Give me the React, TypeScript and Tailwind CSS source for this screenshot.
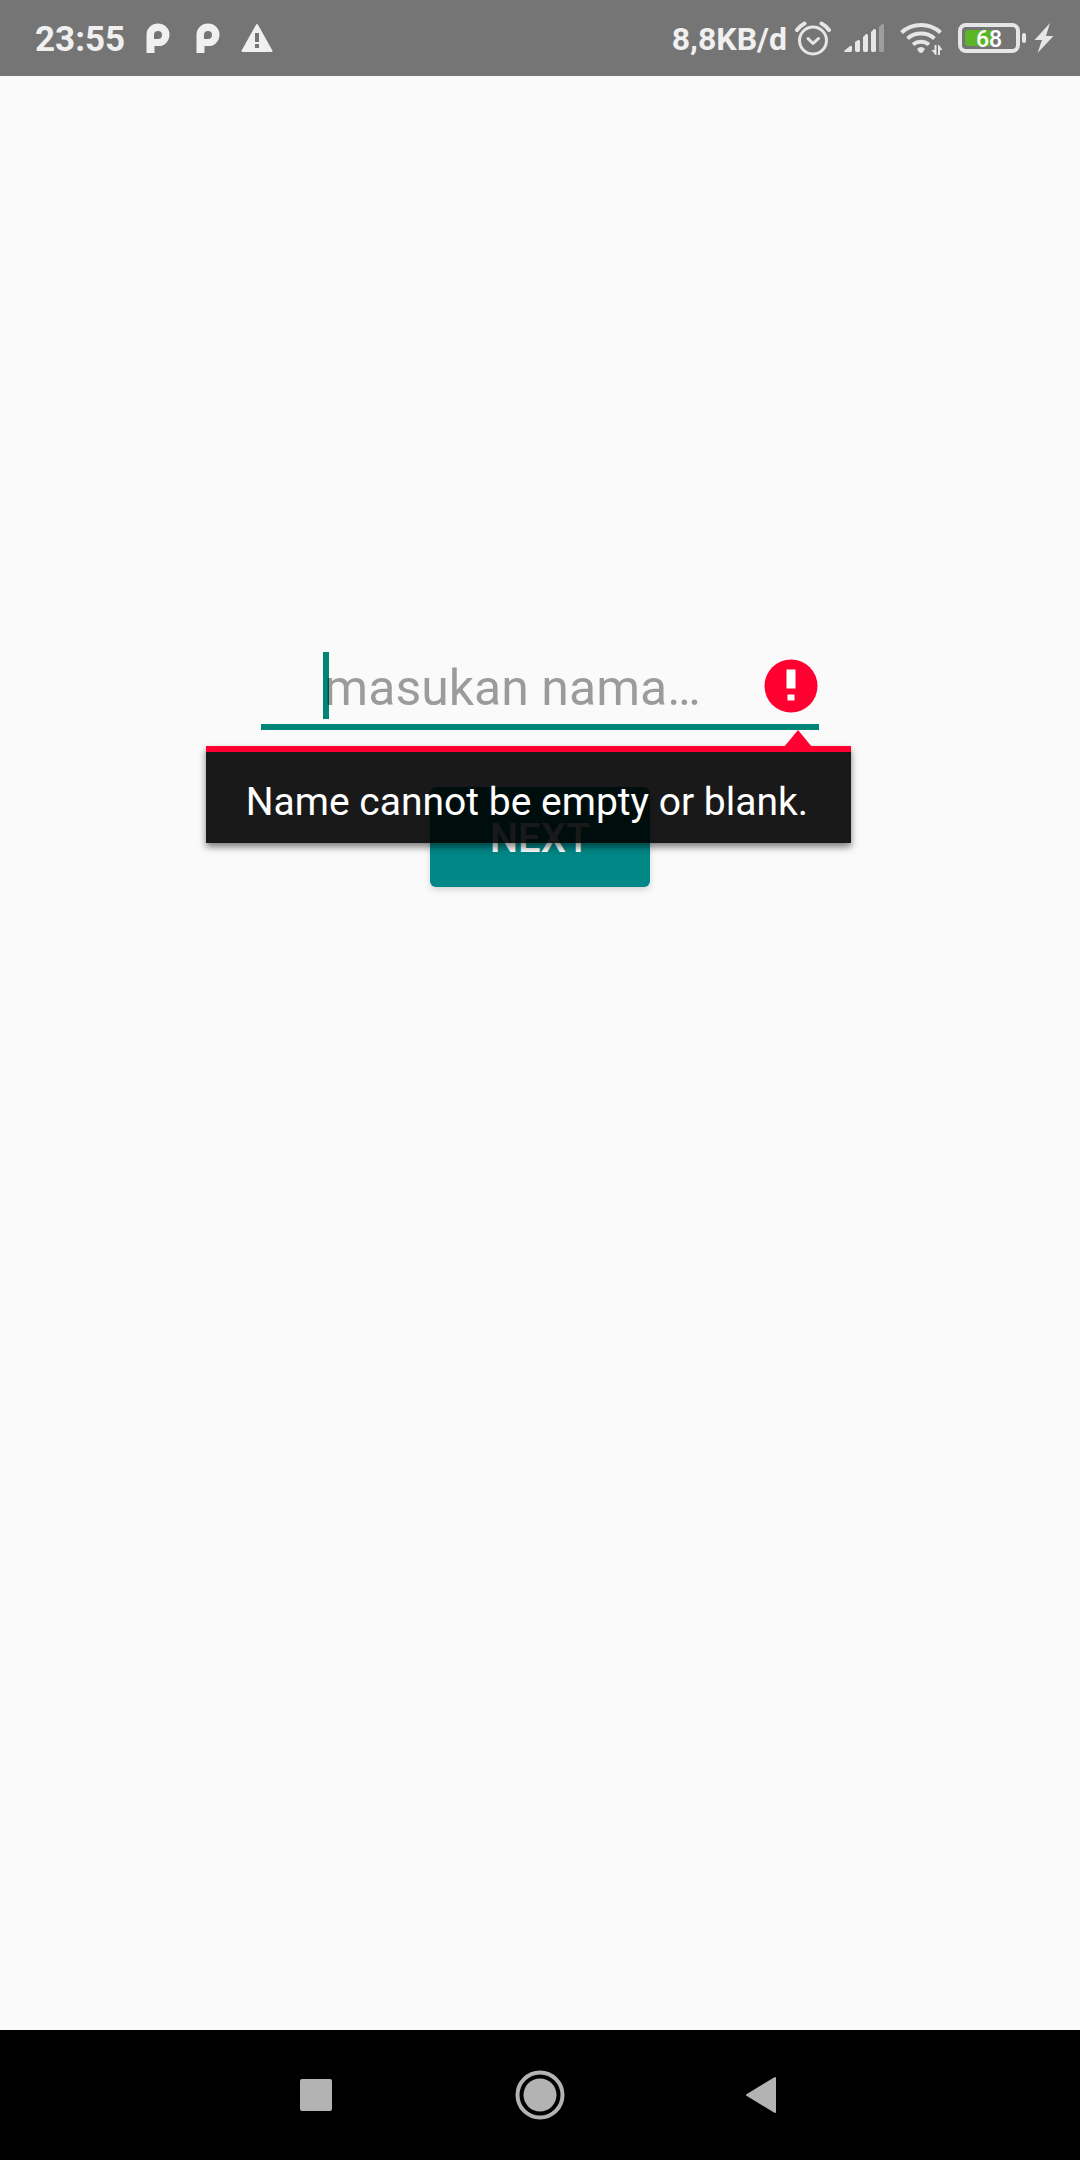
import React from "react";

function PLogo() {
  return (
    <svg viewBox="0 0 24 30" className="h-[30px] w-6" fill="#f0f0f0" aria-hidden="true">
      <path
        fillRule="evenodd"
        d="M0.5 30V11.500a11.500 11 0 0 1 23 0a10.500 11.500 0 0 1-10.500 11.500H8.500v7zM8 16h4a4 4 0 1 0-4-4z"
      />
    </svg>
  );
}

function WarningIcon() {
  return (
    <svg viewBox="0 0 32 30" className="h-[30px] w-8" aria-hidden="true">
      <path d="M16 2 30.5 28h-29z" fill="#f0f0f0" stroke="#f0f0f0" strokeWidth="2" strokeLinejoin="round" />
      <path d="M14 10h4v9h-4zM14 21h4v4h-4z" fill="#757575" />
    </svg>
  );
}

function AlarmIcon() {
  return (
    <svg viewBox="0 0 36 36" className="h-9 w-9" fill="none" stroke="#e6e6e6" strokeLinecap="round" aria-hidden="true">
      <circle cx="18" cy="20.500" r="13.500" strokeWidth="3" />
      <path d="M13 18.500l5 5 5.500-5" strokeWidth="3" strokeLinejoin="round" />
      <path d="M2 10q3-4 7.500-6.500M34 10q-3-4-7.500-6.500" strokeWidth="4" />
    </svg>
  );
}

function SignalIcon() {
  return (
    <svg viewBox="0 0 40 30" className="h-[30px] w-10" fill="#e6e6e6" aria-hidden="true">
      <path d="M0 28l6-5q2-1 2 1v3q0 2-1 2H1q-1 0-1-1z" />
      <path d="M11 19l3-2q2 0 2 1v10l-1 1h-3l-1-1zM19 14l3-3h1l1 1v16l-1 1h-3l-1-1zM27 9l3-3h1l1 1v21l-1 1h-3l-1-1z" />
      <path d="M35 4l3-3h1l1 1v26l-1 1h-3l-1-1z" fill="#9e9e9e" />
    </svg>
  );
}

function WifiIcon() {
  return (
    <svg viewBox="0 0 44 34" className="h-[34px] w-11" fill="none" stroke="#e6e6e6" strokeWidth="4" aria-hidden="true">
      <path d="M1.500 11.500a29 29 0 0 1 39 0" />
      <path d="M7.500 17.500a21 21 0 0 1 27 0" />
      <path d="M13 23.500a13 13 0 0 1 16 0" />
      <path d="M17 28q4-4 8 0l-2 3q-2 2-4 0z" fill="#e6e6e6" stroke="none" />
      <path d="M31.500 29h3v-5h2v10h-1zM38 24h1l3.500 5h-2.500v5h-2z" fill="#e6e6e6" stroke="none" />
    </svg>
  );
}

function Battery() {
  return (
    <div className="flex items-center gap-[2px]">
      <div className="relative flex h-[30px] w-[62px] items-center rounded-lg border-4 border-[#e6e6e6] p-[3px]">
        <span className="h-4 w-7 rounded-[3px] bg-[#5bb526]" />
        <span className="absolute inset-0 flex items-center justify-center pt-[2px] text-[23px] leading-none font-medium text-white">
          68
        </span>
      </div>
      <span className="h-[10px] w-1 rounded-sm bg-[#e6e6e6]" />
    </div>
  );
}

function BoltIcon() {
  return (
    <svg viewBox="0 0 20 30" className="h-[30px] w-5" fill="#e6e6e6" aria-hidden="true">
      <path d="M16 0 0.500 17H8L3.500 30 19.500 13H12z" />
    </svg>
  );
}

function StatusBar() {
  return (
    <header className="flex h-[76px] items-center justify-between bg-[#757575] pr-[26px] pl-[35px] text-[#f0f0f0]">
      <div className="flex items-center">
        <span className="pt-[3px] text-[35px] leading-10 font-bold">23:55</span>
        <div className="ml-[21px] flex items-center gap-[26px]">
          <PLogo />
          <PLogo />
        </div>
        <div className="ml-[21px]">
          <WarningIcon />
        </div>
      </div>
      <div className="flex items-center">
        <span className="pt-[2px] text-[32px] leading-10 font-bold">8,8KB/d</span>
        <div className="ml-2">
          <AlarmIcon />
        </div>
        <div className="ml-[13px]">
          <SignalIcon />
        </div>
        <div className="ml-4">
          <WifiIcon />
        </div>
        <div className="ml-[14px]">
          <Battery />
        </div>
        <div className="ml-2">
          <BoltIcon />
        </div>
      </div>
    </header>
  );
}

function ErrorIcon() {
  return (
    <svg viewBox="0 0 54 54" className="h-[54px] w-[54px]" aria-hidden="true">
      <circle cx="27" cy="27" r="26.500" fill="#ff0031" />
      <path d="M22.500 10.500h9v19h-9zM23.500 35.500h7v6h-7z" fill="#fff" />
    </svg>
  );
}

function ErrorPopup() {
  return (
    <div
      id="name-error"
      role="alert"
      className="absolute top-full -right-8 z-10 mt-[22px] border-t-[6px] border-[#ff0031] bg-black/90 bg-clip-padding pt-[21px] pr-[43px] pb-3 pl-10 text-[39px] leading-[58px] whitespace-nowrap text-white shadow-[0_4px_7px_rgba(0,0,0,0.5)]"
    >
      <svg viewBox="0 0 28 17" className="absolute right-[39px] bottom-full mb-[5px] h-[17px] w-7" aria-hidden="true">
        <path d="M14 0 28 17H0z" fill="#ff0031" />
      </svg>
      Name cannot be empty or blank.
    </div>
  );
}

function NavBar() {
  return (
    <nav className="flex h-[130px] items-center justify-center gap-[148px] bg-black">
      <button type="button" aria-label="Recent apps" className="flex h-20 w-[76px] items-center justify-center">
        <span className="h-8 w-8 rounded-xs bg-[#b3b3b3]" />
      </button>
      <button type="button" aria-label="Home" className="flex h-20 w-[76px] items-center justify-center">
        <svg viewBox="0 0 50 50" className="h-[50px] w-[50px]" aria-hidden="true">
          <circle cx="25" cy="25" r="22.500" fill="none" stroke="#b3b3b3" strokeWidth="4" />
          <circle cx="25" cy="25" r="16.500" fill="#b3b3b3" />
        </svg>
      </button>
      <button type="button" aria-label="Back" className="flex h-20 w-[76px] items-center justify-center pr-[6px]">
        <svg viewBox="0 0 32 38" className="h-[38px] w-8" aria-hidden="true">
          <path d="M2 19 30 2v34z" fill="#b3b3b3" stroke="#b3b3b3" strokeWidth="2" strokeLinejoin="round" />
        </svg>
      </button>
    </nav>
  );
}

export default function App() {
  return (
    <div className="flex min-h-screen flex-col bg-[#fafafa] font-[Roboto,sans-serif]">
      <StatusBar />
      <main className="flex flex-1 flex-col items-center pt-[568px]">
        <form className="flex flex-col items-center gap-[57px]" onSubmit={(e) => e.preventDefault()}>
          <div className="relative flex h-[86px] w-[558px] items-center border-b-[6px] border-[#008577] pt-1 pr-px">
            <span className="pointer-events-none absolute top-2 left-[62px] h-[67px] w-[6px] bg-[#008577]" />
            <input
              type="text"
              aria-label="Nama"
              aria-invalid="true"
              aria-describedby="name-error"
              placeholder="masukan nama…"
              className="relative h-full min-w-0 flex-1 bg-transparent pt-1 text-center text-[50px] text-black outline-none placeholder:text-black/38"
            />
            <ErrorIcon />
            <ErrorPopup />
          </div>
          <button
            type="submit"
            className="h-[100px] w-[220px] rounded-md bg-[#018786] pt-1 text-[40px] font-medium text-white shadow-[0_3px_6px_rgba(0,0,0,0.15)]"
          >
            NEXT
          </button>
        </form>
      </main>
      <NavBar />
    </div>
  );
}
